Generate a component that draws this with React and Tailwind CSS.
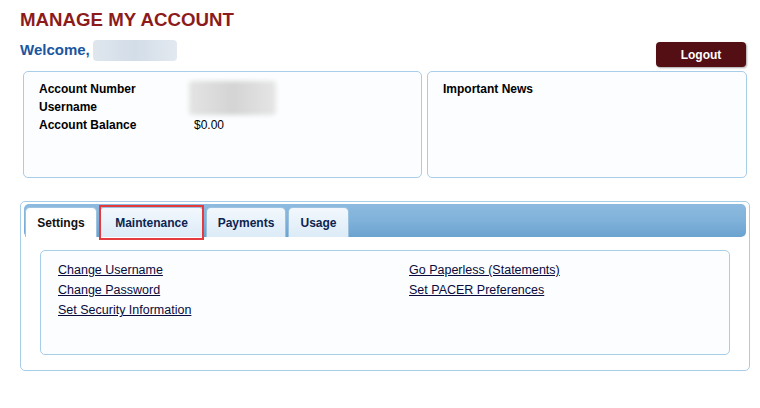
import React from 'react';

const tabs = [
  { label: 'Settings', width: 'w-[72px]', active: true },
  { label: 'Maintenance', width: 'w-[105px]', marked: true },
  { label: 'Payments', width: 'w-[80px]' },
  { label: 'Usage', width: 'w-[61px]' },
];

const leftLinks = ['Change Username', 'Change Password', 'Set Security Information'];
const rightLinks = ['Go Paperless (Statements)', 'Set PACER Preferences'];

const App = () => {
  return (
    <div className="min-h-[408px] w-[760px] bg-white font-['Liberation_Sans',Arial,sans-serif] text-black">
      <div className="pl-5 pt-[10px] w-[750px]">
        <h1 className="text-[18.7px] font-bold leading-5 text-[#8c1c1c]">MANAGE MY ACCOUNT</h1>

        <div className="mt-[10px] flex items-start justify-between pr-[4px]">
          <div className="flex items-center h-[21px]">
            <span className="text-[15px] font-bold text-[#1b56a0]">Welcome,</span>
            <span className="ml-[3px] h-[21px] w-[84px] rounded-sm bg-gradient-to-r from-[#dfe6ee] via-[#d3dde8] to-[#e3e9f0]"></span>
          </div>
          <button className="mt-[2px] h-[25px] w-[90px] rounded-[4px] bg-[#540f14] text-[12px] font-bold text-white shadow-[1px_1px_2px_rgba(0,0,0,0.35)]">
            Logout
          </button>
        </div>

        <div className="mt-[4px] ml-[3px] flex gap-[5px]">
          <div className="h-[107px] w-[399px] rounded-[5px] border border-[#a8cde8] bg-[#fbfdfe] pl-[15px] pt-[8px]">
            <div className="grid grid-cols-[155px_1fr] text-[12px] leading-[18px]">
              <span className="font-bold">Account Number</span>
              <span className="row-span-2 mt-[1px] h-[34px] w-[87px] rounded bg-gradient-to-r from-[#e4e4e4] via-[#d4d4d4] to-[#e6e6e6] blur-[2px] -ml-[5px]"></span>
              <span className="font-bold">Username</span>
              <span className="font-bold">Account Balance</span>
              <span>$0.00</span>
            </div>
          </div>
          <div className="h-[107px] w-[320px] rounded-[5px] border border-[#a8cde8] bg-[#fbfdfe] pl-[15px] pt-[8px]">
            <div className="text-[12px] font-bold leading-[18px]">Important News</div>
          </div>
        </div>

        <div className="mt-[23px] h-[170px] w-[730px] rounded-[5px] border border-[#a8cde8] bg-white px-[3px] pt-[2px]">
          <div className="flex h-[33px] items-end gap-[2px] rounded-[5px] bg-gradient-to-b from-[#8dbadf] via-[#80b2da] to-[#6aa2cf] pl-[1px]">
            {tabs.map((t) => (
              <div
                key={t.label}
                className={`relative flex h-[30px] ${t.width} items-center justify-center rounded-t-[5px] border border-b-0 text-[12px] font-bold ${
                  t.active
                    ? 'border-[#9fc4e2] bg-white text-[#111]'
                    : 'border-[#9cc2e0] bg-gradient-to-b from-[#f2f8fd] to-[#dcebf7] text-[#0c2450]'
                }`}
              >
                {t.label}
                {t.marked && (
                  <span className="absolute -left-[1px] -right-[1px] -top-[3px] -bottom-[3px] border-2 border-[#e33b3e]"></span>
                )}
              </div>
            ))}
          </div>

          <div className="mx-[16px] mt-[13px] h-[105px] rounded-[5px] border border-[#a8cde8] bg-[#fbfdfe] pl-[17px] pt-[9px]">
            <div className="grid grid-cols-[351px_1fr] text-[12.5px] leading-5">
              <div className="flex flex-col">
                {leftLinks.map((l) => (
                  <a key={l} href="#" className="w-fit text-[#0a0a3c] underline">
                    {l}
                  </a>
                ))}
              </div>
              <div className="flex flex-col">
                {rightLinks.map((l) => (
                  <a key={l} href="#" className="w-fit text-[#0a0a3c] underline">
                    {l}
                  </a>
                ))}
              </div>
            </div>
          </div>
        </div>
      </div>
    </div>
  );
};

export default App;
